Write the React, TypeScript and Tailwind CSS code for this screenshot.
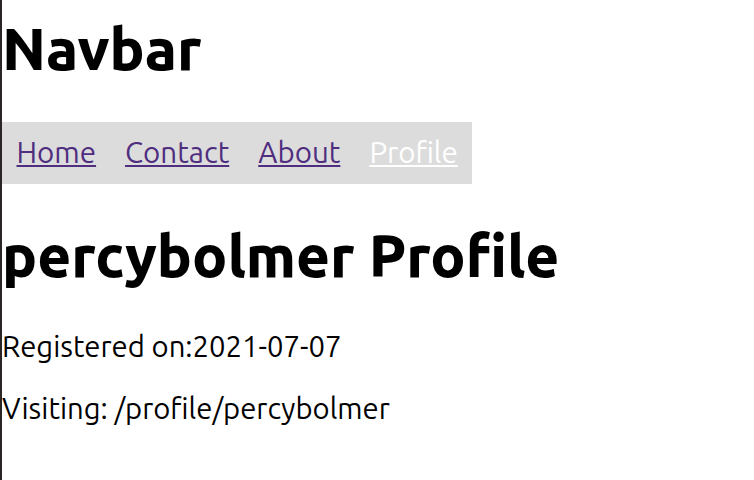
const links = [
  { label: 'Home', active: false },
  { label: 'Contact', active: false },
  { label: 'About', active: false },
  { label: 'Profile', active: true },
];

export default function App() {
  return (
    <div
      className="min-h-[480px] border-l-2 border-[#2b2626] bg-white text-[29.25px] leading-[1.149] text-black"
      style={{ fontFamily: 'Ubuntu, "Open Sans", sans-serif' }}
    >
      <h1 className="pt-[16px] mb-[39px] text-[58.3px] font-black leading-[1.149]">Navbar</h1>

      {/* Nav */}
      <nav className="flex w-fit bg-[#dcdcdc] text-[29.5px]">
        {links.map(l => (
          <a
            key={l.label}
            href="#"
            className={
              l.active
                ? 'px-[14.5px] py-[14px] text-white underline'
                : 'px-[14.5px] py-[14px] text-[#4f2d7f] underline'
            }
          >
            {l.label}
          </a>
        ))}
      </nav>

      <h1 className="mt-[39px] mb-[39px] text-[58.3px] font-black leading-[1.149]">percybolmer Profile</h1>
      <p className="mb-[29px] pt-px">Registered on:2021-07-07</p>
      <p>Visiting: /profile/percybolmer</p>
    </div>
  );
}
